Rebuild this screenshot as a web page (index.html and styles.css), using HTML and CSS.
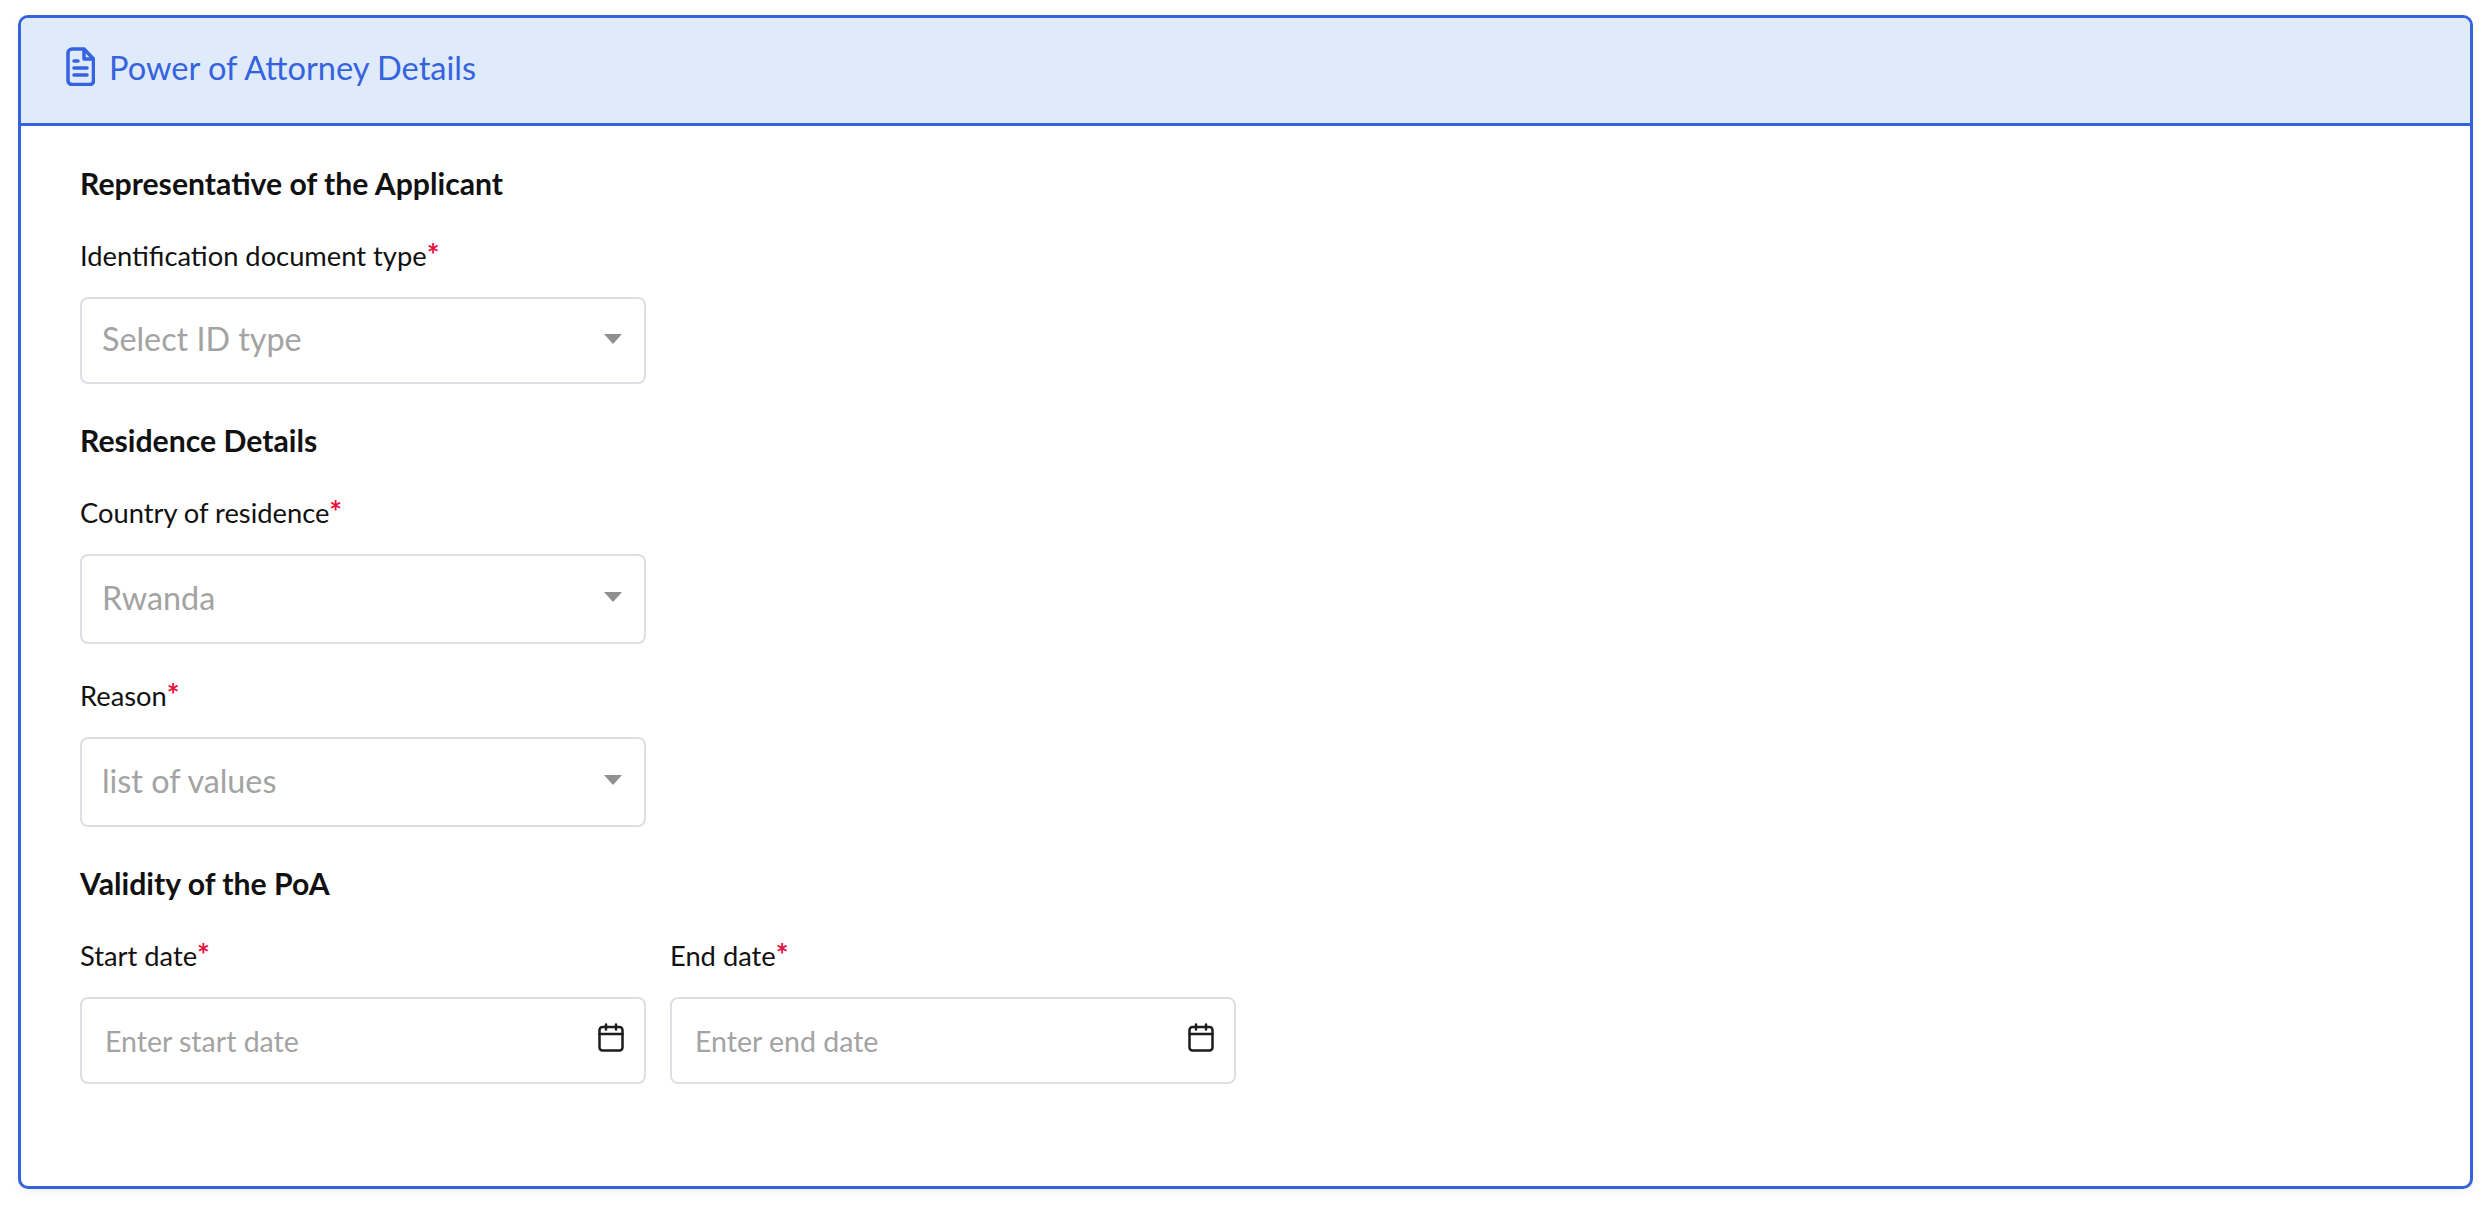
FILE: index.html
```html
<!DOCTYPE html>
<html lang="en">
<head>
  <meta charset="UTF-8">
  <title>Power of Attorney Details</title>
  <link rel="stylesheet" href="styles.css">
</head>
<body>
  <div class="card">
    <div class="card-header">
      <svg class="doc-icon" viewBox="0 0 29 39" fill="none" stroke="#3563e0" stroke-width="3.500" stroke-linejoin="round" stroke-linecap="round">
        <path d="M6 2h12l9.500 10v22a3.500 3.500 0 0 1-3.500 3.500H6A4 4 0 0 1 2 33.500V6a4 4 0 0 1 4-4z"/>
        <path d="M18 2.500v9.500h9"/>
        <path d="M8 14h4M8 21h13M8 28h13"/>
      </svg>
      <span class="card-title">Power of Attorney Details</span>
    </div>
    <div class="card-body">
      <h3 class="section-title first">Representative of the Applicant</h3>
      <div class="form-group">
        <label class="field-label">Identification document type<span class="req">*</span></label>
        <div class="field">
          <span class="value">Select ID type</span>
          <span class="caret"></span>
        </div>
      </div>

      <h3 class="section-title">Residence Details</h3>
      <div class="form-group">
        <label class="field-label">Country of residence<span class="req">*</span></label>
        <div class="field tall">
          <span class="value">Rwanda</span>
          <span class="caret"></span>
        </div>
      </div>
      <div class="form-group next">
        <label class="field-label">Reason<span class="req">*</span></label>
        <div class="field tall">
          <span class="value">list of values</span>
          <span class="caret"></span>
        </div>
      </div>

      <h3 class="section-title">Validity of the PoA</h3>
      <div class="date-row">
        <div class="form-group">
          <label class="field-label">Start date<span class="req">*</span></label>
          <div class="field date">
            <span class="value small">Enter start date</span>
            <svg class="cal-icon" viewBox="0 0 26 29" fill="none" stroke="#1c1c1c" stroke-width="2.500" stroke-linejoin="round" stroke-linecap="round">
              <rect x="1.500" y="4" width="23" height="23.500" rx="3"/>
              <path d="M1.500 11h23M8 1.500v5M18 1.500v5"/>
            </svg>
          </div>
        </div>
        <div class="form-group">
          <label class="field-label">End date<span class="req">*</span></label>
          <div class="field date">
            <span class="value small">Enter end date</span>
            <svg class="cal-icon" viewBox="0 0 26 29" fill="none" stroke="#1c1c1c" stroke-width="2.500" stroke-linejoin="round" stroke-linecap="round">
              <rect x="1.500" y="4" width="23" height="23.500" rx="3"/>
              <path d="M1.500 11h23M8 1.500v5M18 1.500v5"/>
            </svg>
          </div>
        </div>
      </div>
    </div>
  </div>
</body>
</html>
```

FILE: styles.css
```css
* {
  box-sizing: border-box;
}
body {
  margin: 0;
  padding: 15px 17px 24px 18px;
  background-color: #ffffff;
  color: #111111;
  font-family: 'Lato', sans-serif;
}
.card {
  height: 1174px;
  border: 3px solid #3563e0;
  border-radius: 10px;
  background-color: #ffffff;
  box-shadow: 0 4px 10px rgba(0, 0, 0, 0.05);
}
.card-header {
  display: flex;
  align-items: center;
  gap: 14px;
  height: 108px;
  padding: 0 0 6px 45px;
  background-color: #dfebfb;
  border-bottom: 3px solid #3563e0;
  border-radius: 7px 7px 0 0;
}
.doc-icon {
  width: 29px;
  height: 39px;
  margin-bottom: 2px;
}
.card-title {
  font-size: 32.600px;
  color: #3563e0;
}
.card-body {
  padding: 0 0 0 59px;
}
.section-title {
  margin: 36px 0 0;
  font-size: 30.200px;
  font-weight: 700;
  line-height: 40px;
}
.section-title.first {
  margin-top: 37px;
}
.form-group {
  margin-top: 33px;
}
.form-group.next {
  margin-top: 32px;
}
.field-label {
  display: block;
  margin-bottom: 21px;
  font-size: 27.300px;
  line-height: 40px;
}
.req {
  color: #e8103c;
  font-size: 30px;
  font-weight: 700;
  line-height: 1;
}
.field {
  display: flex;
  align-items: center;
  justify-content: space-between;
  width: 566px;
  height: 87px;
  padding: 0 22px 4px 20px;
  border: 2px solid #dcdfe3;
  border-radius: 8px;
}
.field.tall {
  height: 90px;
}
.field.date {
  padding: 0 20px 0 23px;
}
.value {
  font-size: 32.300px;
  color: #a3a3a3;
}
.value.small {
  font-size: 28.500px;
}
.caret {
  width: 0;
  height: 0;
  border-left: 9px solid transparent;
  border-right: 9px solid transparent;
  border-top: 10px solid #909090;
}
.cal-icon {
  width: 26px;
  height: 29px;
  margin-bottom: 6px;
}
.date-row {
  display: flex;
  gap: 24px;
}
```
